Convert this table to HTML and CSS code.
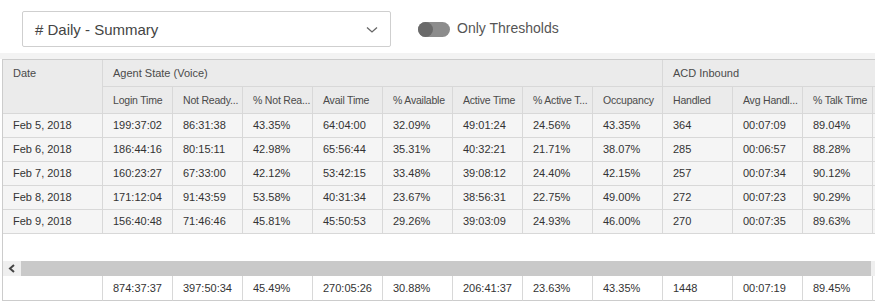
FILE: index.html
```html
<!DOCTYPE html>
<html>
<head>
<meta charset="utf-8">
<link rel="stylesheet" href="styles.css">
</head>
<body>
<div class="toolbar">
  <div class="select">
    <span class="select-text"># Daily - Summary</span>
    <svg class="chevron" width="12" height="8" viewBox="0 0 12 8"><path d="M1 1.5 L6 6 L11 1.5" fill="none" stroke="#666" stroke-width="1.3"/></svg>
  </div>
  <div class="toggle">
    <span class="track"><span class="knob"></span></span>
    <span class="toggle-label">Only Thresholds</span>
  </div>
</div>
<div class="band"></div>
<div class="grid">
  <div class="cols head">
    <div class="cell h1 date">Date</div>
    <div class="cell h1 span8">Agent State (Voice)</div>
    <div class="cell h1 span4">ACD Inbound</div>
    <div class="cell h2">Login Time</div>
    <div class="cell h2" title="Not Ready Time">Not Ready...</div>
    <div class="cell h2" title="% Not Ready">% Not Rea...</div>
    <div class="cell h2">Avail Time</div>
    <div class="cell h2">% Available</div>
    <div class="cell h2">Active Time</div>
    <div class="cell h2" title="% Active Time">% Active T...</div>
    <div class="cell h2">Occupancy</div>
    <div class="cell h2">Handled</div>
    <div class="cell h2" title="Avg Handle Time">Avg Handl...</div>
    <div class="cell h2">% Talk Time</div>
    <div class="cell h2"></div>
  </div>
  <div class="body">
    <div class="cols row">
      <div class="cell">Feb 5, 2018</div><div class="cell">199:37:02</div><div class="cell">86:31:38</div><div class="cell">43.35%</div><div class="cell">64:04:00</div><div class="cell">32.09%</div><div class="cell">49:01:24</div><div class="cell">24.56%</div><div class="cell">43.35%</div><div class="cell">364</div><div class="cell">00:07:09</div><div class="cell">89.04%</div><div class="cell"></div>
    </div>
    <div class="cols row">
      <div class="cell">Feb 6, 2018</div><div class="cell">186:44:16</div><div class="cell">80:15:11</div><div class="cell">42.98%</div><div class="cell">65:56:44</div><div class="cell">35.31%</div><div class="cell">40:32:21</div><div class="cell">21.71%</div><div class="cell">38.07%</div><div class="cell">285</div><div class="cell">00:06:57</div><div class="cell">88.28%</div><div class="cell"></div>
    </div>
    <div class="cols row">
      <div class="cell">Feb 7, 2018</div><div class="cell">160:23:27</div><div class="cell">67:33:00</div><div class="cell">42.12%</div><div class="cell">53:42:15</div><div class="cell">33.48%</div><div class="cell">39:08:12</div><div class="cell">24.40%</div><div class="cell">42.15%</div><div class="cell">257</div><div class="cell">00:07:34</div><div class="cell">90.12%</div><div class="cell"></div>
    </div>
    <div class="cols row">
      <div class="cell">Feb 8, 2018</div><div class="cell">171:12:04</div><div class="cell">91:43:59</div><div class="cell">53.58%</div><div class="cell">40:31:34</div><div class="cell">23.67%</div><div class="cell">38:56:31</div><div class="cell">22.75%</div><div class="cell">49.00%</div><div class="cell">272</div><div class="cell">00:07:23</div><div class="cell">90.29%</div><div class="cell"></div>
    </div>
    <div class="cols row">
      <div class="cell">Feb 9, 2018</div><div class="cell">156:40:48</div><div class="cell">71:46:46</div><div class="cell">45.81%</div><div class="cell">45:50:53</div><div class="cell">29.26%</div><div class="cell">39:03:09</div><div class="cell">24.93%</div><div class="cell">46.00%</div><div class="cell">270</div><div class="cell">00:07:35</div><div class="cell">89.63%</div><div class="cell"></div>
    </div>
  </div>
  <div class="hscroll">
    <div class="sbtn">
      <svg width="8" height="9" viewBox="0 0 8 9"><path d="M6 1 L2 4.5 L6 8" fill="none" stroke="#444" stroke-width="2"/></svg>
    </div>
    <div class="thumb"></div>
    <div class="sbtn-right"></div>
  </div>
  <div class="cols foot">
    <div class="cell"></div><div class="cell">874:37:37</div><div class="cell">397:50:34</div><div class="cell">45.49%</div><div class="cell">270:05:26</div><div class="cell">30.88%</div><div class="cell">206:41:37</div><div class="cell">23.63%</div><div class="cell">43.35%</div><div class="cell">1448</div><div class="cell">00:07:19</div><div class="cell">89.45%</div><div class="cell"></div>
  </div>
</div>
</body>
</html>
```
FILE: styles.css
```css
html, body {
  margin: 0;
  padding: 0;
  background: #ffffff;
  font-family: "Liberation Sans", Arial, sans-serif;
  color: #333333;
}

.toolbar {
  height: 53px;
  box-sizing: border-box;
  padding: 11px 0 0 22px;
  display: flex;
  align-items: flex-start;
}

.select {
  width: 369px;
  height: 36px;
  box-sizing: border-box;
  border: 1px solid #cfcfcf;
  border-radius: 2px;
  display: flex;
  align-items: center;
  justify-content: space-between;
  padding: 0 12px 0 12px;
}

.select-text {
  font-size: 15px;
  color: #444444;
}

.chevron {
  display: block;
  margin-top: 1px;
}

.toggle {
  display: flex;
  align-items: center;
  margin-left: 27px;
  height: 36px;
}

.track {
  width: 32px;
  height: 15px;
  border-radius: 8px;
  background: #8c8c8c;
  display: flex;
  align-items: center;
}

.knob {
  width: 15px;
  height: 15px;
  border-radius: 50%;
  background: #6a6a6a;
}

.toggle-label {
  margin-left: 7px;
  font-size: 14px;
  color: #555555;
  margin-top: -2px;
}

.band {
  height: 6px;
  background: #f3f3f3;
}

.grid {
  margin-left: 2px;
  border-left: 1px solid #cccccc;
  border-top: 1px solid #cccccc;
  overflow: hidden;
}

.cols {
  display: grid;
  grid-template-columns: 100px repeat(12, 70px);
  width: 940px;
}

.cell {
  box-sizing: border-box;
  border-right: 1px solid #d8d8d8;
  border-bottom: 1px solid #d8d8d8;
  padding: 0 2px 0 10px;
  font-size: 11px;
  white-space: nowrap;
  overflow: hidden;
}

.head {
  grid-template-rows: 27px 27px;
  background: #ebebeb;
}

.head .cell {
  color: #4a4a4a;
  line-height: 26px;
}

.head .h2 {
  font-size: 10.5px;
  letter-spacing: -0.2px;
  padding-right: 0;
}

.head .date {
  grid-row: span 2;
}

.head .span8 {
  grid-column: span 8;
}

.head .span4 {
  grid-column: span 4;
}

.body {
  height: 147px;
  background: #ffffff;
}

.row {
  background: #f5f5f5;
}

.row .cell {
  height: 24px;
  line-height: 23px;
  color: #333333;
}

.hscroll {
  height: 15px;
  display: flex;
}

.sbtn {
  width: 18px;
  background: #efefef;
  display: flex;
  align-items: center;
  justify-content: center;
}

.sbtn svg {
  display: block;
}

.thumb {
  width: 850px;
  background: #c9c9c9;
}

.sbtn-right {
  flex: 1;
  background: #efefef;
}

.foot {
  background: #ffffff;
}

.foot .cell {
  height: 25px;
  line-height: 24px;
  border-bottom-color: #cccccc;
}
```
